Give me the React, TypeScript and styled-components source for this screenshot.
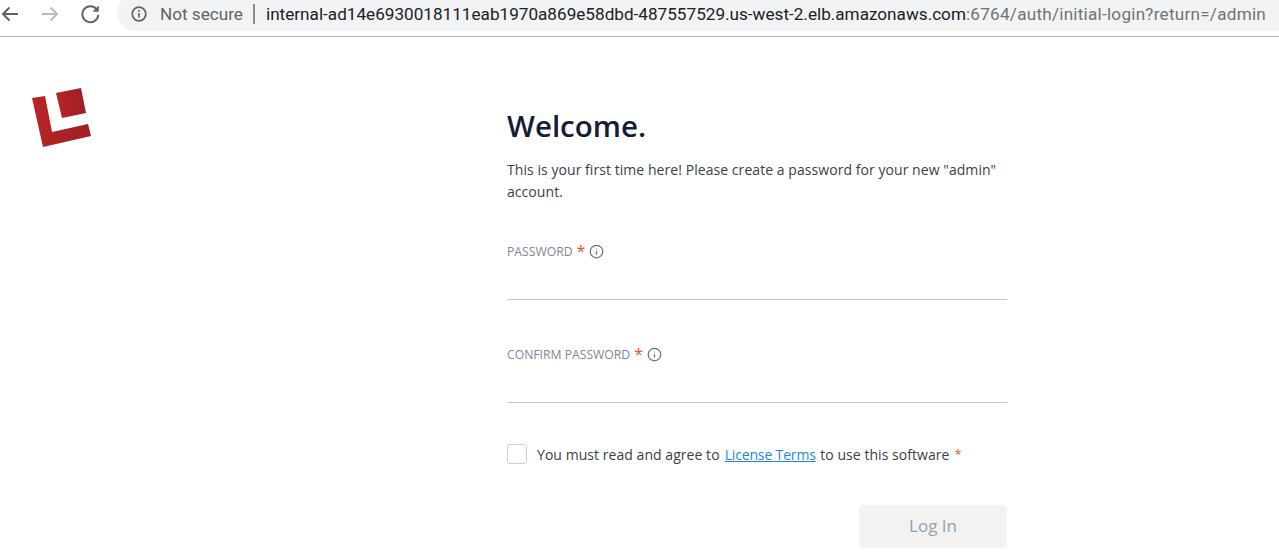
import React from 'react';
import styled, { createGlobalStyle } from 'styled-components';
import { Info } from 'lucide-react';

const GlobalStyle = createGlobalStyle`
  html, body { margin: 0; padding: 0; background: #fff; overflow: hidden; }
  body { font-family: "Open Sans", "Liberation Sans", sans-serif; }
`;

const Page = styled.div`
  width: 1279px;
  height: 560px;
  display: flex;
  flex-direction: column;
  overflow: hidden;
`;

const BrowserBar = styled.div`
  height: 36px;
  flex: none;
  display: flex;
  align-items: flex-start;
  border-bottom: 1px solid #b9b9b9;
`;

const NavGroup = styled.div`
  display: flex;
  gap: 20px;
  margin: 4px 17px 0 0;
`;

const NavIcon = styled.svg<{ $dim?: boolean }>`
  width: 20px;
  height: 20px;
  flex: none;
  fill: none;
  stroke: ${(p) => (p.$dim ? '#b8babc' : '#5f6368')};
  stroke-width: 2;
`;

const UrlPill = styled.div`
  flex: 1;
  height: 36px;
  margin-top: -5px;
  padding: 2px 0 0 14px;
  box-sizing: border-box;
  background: #f1f3f4;
  border-radius: 18px 0 0 18px;
  display: flex;
  align-items: center;
  font-family: "Roboto", "Liberation Sans", sans-serif;
  font-size: 17.15px;
  white-space: nowrap;
  overflow: hidden;
`;

const NotSecure = styled.span`
  color: #5f6368;
  margin-left: 13px;
`;

const Divider = styled.span`
  width: 2px;
  height: 20px;
  background: #8a8c8e;
  margin: 0 11px 0 10px;
`;

const Host = styled.span`
  color: #202124;
`;

const UrlRest = styled.span`
  color: #6f7377;
  letter-spacing: 0.24px;
`;

const Body = styled.div`
  flex: 1;
  display: flex;
`;

const LogoColumn = styled.div`
  width: 507px;
  flex: none;
  padding: 50px 0 0 31px;
  box-sizing: border-box;
`;

const Form = styled.div`
  width: 500px;
  padding-top: 69px;
`;

const Title = styled.h1`
  margin: 0 0 13px;
  font-size: 29.5px;
  line-height: 40px;
  font-weight: 600;
  color: #141c3a;
`;

const Intro = styled.p`
  margin: 0 0 37px;
  font-size: 14px;
  line-height: 22px;
  letter-spacing: 0.057px;
  color: #3a3f47;
`;

const FieldList = styled.div`
  display: flex;
  flex-direction: column;
  gap: 43px;
`;

const Field = styled.div`
  height: 59px;
  border-bottom: 1px solid #c1c7cd;
`;

const LabelRow = styled.div`
  display: flex;
  align-items: center;
  height: 22px;
  font-size: 12.2px;
  color: #7b8794;
`;

const Required = styled.span`
  color: #e5532d;
  font-size: 16px;
  margin-left: 4px;
`;

const InfoIcon = styled(Info)`
  width: 15px;
  height: 15px;
  margin-left: 4px;
  color: #66727f;
`;

const TermsRow = styled.div`
  display: flex;
  align-items: center;
  font-size: 14px;
  letter-spacing: 0.05px;
  color: #3a3f47;
  margin-top: 41px;
`;

const Checkbox = styled.span`
  width: 18px;
  height: 18px;
  border: 1px solid #cfcfcf;
  border-radius: 3px;
  margin-right: 10px;
  flex: none;
`;

const TermsLink = styled.a`
  color: #1e88e5;
  text-decoration: underline;
  letter-spacing: -0.15px;
  margin: 0 4.500px 0 5px;
`;

const Star = styled.span`
  color: #e5532d;
  font-size: 13px;
  margin-left: 5px;
`;

const Actions = styled.div`
  display: flex;
  justify-content: flex-end;
  margin-top: 41px;
`;

const LoginButton = styled.button`
  width: 148px;
  height: 43px;
  padding: 0 0 2px;
  border: none;
  border-radius: 5px;
  background: #f2f2f2;
  color: #98a0a8;
  font-family: inherit;
  font-size: 17px;
`;

const App: React.FC = () => (
  <Page>
    <GlobalStyle />
    <BrowserBar>
      <NavGroup>
        <NavIcon viewBox="0 0 20 20">
          <path d="M18 10H3M9.500 3.500L3 10l6.500 6.500" />
        </NavIcon>
        <NavIcon viewBox="0 0 20 20" $dim>
          <path d="M2 10h15M10.500 3.500L17 10l-6.500 6.500" />
        </NavIcon>
        <NavIcon viewBox="0 0 20 20">
          <path d="M16.800 5.500A8 8 0 1 0 18.300 11" />
          <path d="M18.800 1.500v6.200h-6.200z" fill="#5f6368" stroke="none" />
        </NavIcon>
      </NavGroup>
      <UrlPill>
        <svg width="16" height="16" viewBox="0 0 16 16" fill="none" stroke="#5f6368" strokeWidth="1.7">
          <circle cx="8" cy="8" r="6.8" />
          <path d="M8 7v4.500M8 4v1.700" />
        </svg>
        <NotSecure>Not secure</NotSecure>
        <Divider />
        <Host>internal-ad14e6930018111eab1970a869e58dbd-487557529.us-west-2.elb.amazonaws.com</Host>
        <UrlRest>:6764/auth/initial-login?return=/admin</UrlRest>
      </UrlPill>
    </BrowserBar>
    <Body>
      <LogoColumn>
        <svg width="62" height="62" viewBox="31 87 62 62" display="block">
          <defs>
            <linearGradient id="logoRed" x1="0" y1="0" x2="1" y2="0">
              <stop offset="0" stopColor="#b92426" />
              <stop offset="1" stopColor="#9c2022" />
            </linearGradient>
          </defs>
          <path fill="url(#logoRed)" d="M32 98l13-2 7 36 36-8 3 12-48 11z" />
          <path fill="url(#logoRed)" d="M56 93l25-5 5 25-24 5z" />
        </svg>
      </LogoColumn>
      <Form>
        <Title>Welcome.</Title>
        <Intro>
          This is your first time here! Please create a password for your new "admin" account.
        </Intro>
        <FieldList>
          <Field>
            <LabelRow>
              PASSWORD<Required>*</Required><InfoIcon />
            </LabelRow>
          </Field>
          <Field>
            <LabelRow>
              CONFIRM PASSWORD<Required>*</Required><InfoIcon />
            </LabelRow>
          </Field>
        </FieldList>
        <TermsRow>
          <Checkbox />
          You must read and agree to<TermsLink href="#">License Terms</TermsLink>to use this software<Star>*</Star>
        </TermsRow>
        <Actions>
          <LoginButton disabled>Log In</LoginButton>
        </Actions>
      </Form>
    </Body>
  </Page>
);

export default App;
